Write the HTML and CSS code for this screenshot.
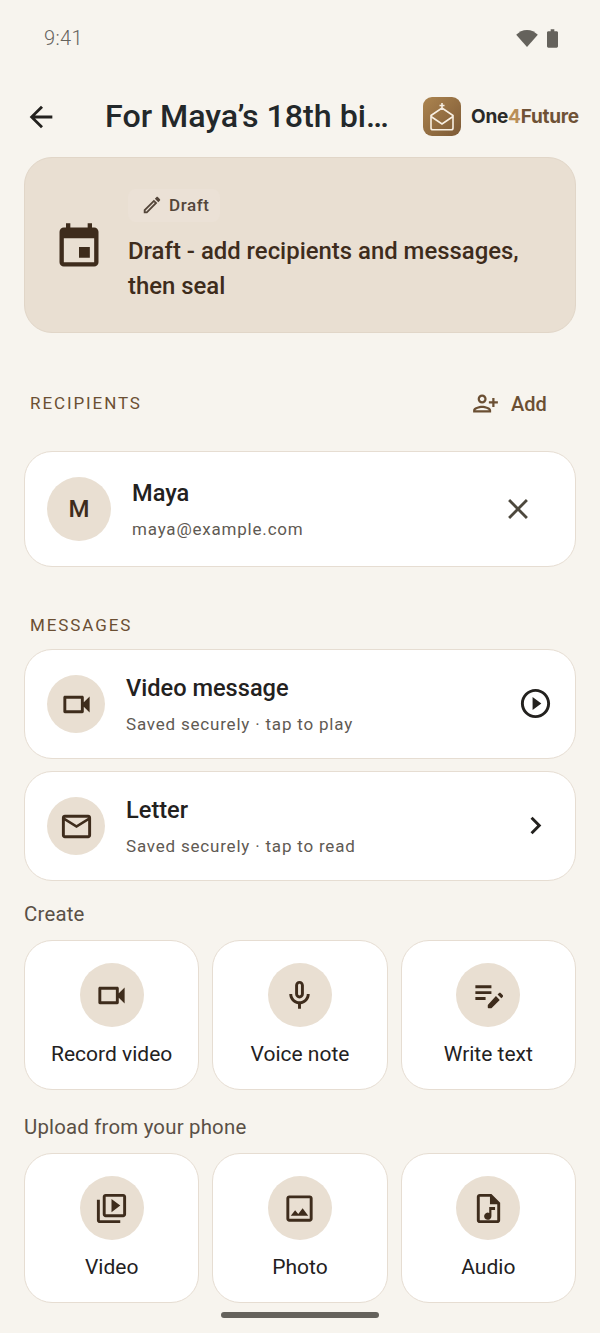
FILE: index.html
```html
<!DOCTYPE html>
<html>
<head>
	<title>For Maya's 18th birthday</title>
	<link rel="stylesheet" href="styles.css">
</head>
<body>
	<div class="screen">
		<div class="status_bar">
			<span class="status_time">9:41</span>
			<div class="status_icons">
				<svg class="wifi_icon" viewBox="0 0 24 20"><path d="M12 20L0 6.500C3 3.200 7.200 1 12 1s9 2.200 12 5.500z"/></svg>
				<svg class="battery_icon" viewBox="0 0 12 20"><path d="M4 0h4v2h2.500c.8 0 1.500.7 1.500 1.500v15c0 .8-.7 1.500-1.500 1.500h-9C.7 20 0 19.300 0 18.500v-15C0 2.700.7 2 1.500 2H4z"/></svg>
			</div>
		</div>

		<div class="top_bar">
			<svg class="back_icon" viewBox="0 0 24 24"><path d="M20 11H7.830l5.590-5.590L12 4l-8 8 8 8 1.410-1.410L7.830 13H20v-2z"/></svg>
			<h1 class="title">For Maya’s 18th bi…</h1>
			<div class="logo">
				<svg class="logo_mark" viewBox="0 0 38 39">
					<path class="logo_line" d="M19 6v7M16.500 8.500h5M8 18.500L19 11l11 7.500v12.500c0 1-.8 1.800-1.800 1.800H9.800C8.800 32.800 8 32 8 31z"/>
					<path class="logo_line" d="M8 19.500l11 7.500 11-7.500"/>
				</svg>
				<span class="logo_text">One<span class="logo_four">4</span><span class="logo_future">Future</span></span>
			</div>
		</div>

		<div class="banner">
			<svg class="banner_icon" viewBox="0 0 24 24"><path d="M17 12h-5v5h5v-5zM16 1v2H8V1H6v2H5c-1.110 0-1.990.9-1.990 2L3 19c0 1.100.89 2 2 2h14c1.100 0 2-.9 2-2V5c0-1.100-.9-2-2-2h-1V1h-2zm3 18H5V8h14v11z"/></svg>
			<div class="banner_body">
				<div class="chip">
					<svg class="chip_icon" viewBox="0 0 24 24"><path d="M14.060 9.020l.92.92L5.920 19H5v-.92l9.060-9.060M17.660 3c-.25 0-.51.1-.7.29l-1.830 1.830 3.750 3.750 1.830-1.830c.39-.39.39-1.020 0-1.410l-2.340-2.340c-.2-.2-.45-.29-.71-.29zm-3.600 3.190L3 17.250V21h3.750L17.810 9.940l-3.750-3.750z"/></svg>
					<span>Draft</span>
				</div>
				<p class="banner_text">Draft - add recipients and messages, then seal</p>
			</div>
		</div>

		<div class="recipients_head">
			<span class="section_label">RECIPIENTS</span>
			<div class="add_button">
				<svg class="add_icon" viewBox="0 0 24 24"><path d="M15 12c2.210 0 4-1.790 4-4s-1.790-4-4-4-4 1.790-4 4 1.790 4 4 4zm0-6c1.100 0 2 .9 2 2s-.9 2-2 2-2-.9-2-2 .9-2 2-2zm0 8c-2.670 0-8 1.340-8 4v2h16v-2c0-2.660-5.330-4-8-4zm-6 4c.22-.72 3.310-2 6-2 2.700 0 5.800 1.290 6 2H9zm-3-3v-3h3v-2H6V7H4v3H1v2h3v3h2z"/></svg>
				<span>Add</span>
			</div>
		</div>

		<div class="card recipient_card">
			<div class="avatar">M</div>
			<div class="card_text">
				<div class="recipient_name">Maya</div>
				<div class="card_sub">maya@example.com</div>
			</div>
			<svg class="close_icon" viewBox="0 0 24 24"><path d="M19 6.410L17.590 5 12 10.590 6.410 5 5 6.410 10.590 12 5 17.590 6.410 19 12 13.410 17.590 19 19 17.590 13.410 12z"/></svg>
		</div>

		<div class="section_label messages_label">MESSAGES</div>

		<div class="card message_card">
			<div class="round_icon small">
				<svg class="glyph" viewBox="0 0 24 24"><path d="M15 8v8H5V8h10m1-2H4c-.55 0-1 .45-1 1v10c0 .55.45 1 1 1h12c.55 0 1-.45 1-1v-3.500l4 4v-11l-4 4V7c0-.55-.45-1-1-1z"/></svg>
			</div>
			<div class="card_text">
				<div class="message_title">Video message</div>
				<div class="card_sub">Saved securely · tap to play</div>
			</div>
			<svg class="trail_icon" viewBox="0 0 24 24"><path d="M10 16.500l6-4.500-6-4.500v9zM12 2C6.480 2 2 6.480 2 12s4.480 10 10 10 10-4.480 10-10S17.520 2 12 2zm0 18c-4.410 0-8-3.590-8-8s3.590-8 8-8 8 3.590 8 8-3.590 8-8 8z"/></svg>
		</div>

		<div class="card message_card second">
			<div class="round_icon small">
				<svg class="glyph" viewBox="0 0 24 24"><path d="M22 6c0-1.100-.9-2-2-2H4c-1.100 0-2 .9-2 2v12c0 1.100.9 2 2 2h16c1.100 0 2-.9 2-2V6zm-2 0l-8 5-8-5h16zm0 12H4V8l8 5 8-5v10z"/></svg>
			</div>
			<div class="card_text">
				<div class="message_title">Letter</div>
				<div class="card_sub">Saved securely · tap to read</div>
			</div>
			<svg class="trail_icon" viewBox="0 0 24 24"><path d="M10 6L8.590 7.410 13.170 12l-4.580 4.590L10 18l6-6z"/></svg>
		</div>

		<div class="group_label create_label">Create</div>
		<div class="tiles">
			<div class="tile">
				<div class="round_icon">
					<svg class="glyph" viewBox="0 0 24 24"><path d="M15 8v8H5V8h10m1-2H4c-.55 0-1 .45-1 1v10c0 .55.45 1 1 1h12c.55 0 1-.45 1-1v-3.500l4 4v-11l-4 4V7c0-.55-.45-1-1-1z"/></svg>
				</div>
				<span>Record video</span>
			</div>
			<div class="tile">
				<div class="round_icon">
					<svg class="glyph" viewBox="0 0 24 24"><path d="M12 14c1.660 0 3-1.340 3-3V5c0-1.660-1.340-3-3-3S9 3.340 9 5v6c0 1.660 1.340 3 3 3zm-1-9c0-.55.45-1 1-1s1 .45 1 1v6c0 .55-.45 1-1 1s-1-.45-1-1V5zm6 6c0 2.760-2.240 5-5 5s-5-2.240-5-5H5c0 3.530 2.610 6.430 6 6.920V21h2v-3.080c3.390-.49 6-3.390 6-6.920h-2z"/></svg>
				</div>
				<span>Voice note</span>
			</div>
			<div class="tile">
				<div class="round_icon">
					<svg class="glyph" viewBox="0 0 24 24"><path d="M3 5h11v2H3zM3 9h11v2H3zM3 13h7v2H3zM18.200 11.300l.9-.9c.4-.4 1-.4 1.400 0l1.200 1.200c.4.4.4 1 0 1.400l-.9.9zM17.100 12.400l2.600 2.600-5.500 5.500c-.2.2-.4.3-.7.3h-1.500c-.3 0-.5-.2-.5-.5v-1.500c0-.3.1-.5.3-.7z"/></svg>
				</div>
				<span>Write text</span>
			</div>
		</div>

		<div class="group_label upload_label">Upload from your phone</div>
		<div class="tiles">
			<div class="tile">
				<div class="round_icon">
					<svg class="glyph" viewBox="0 0 24 24"><path d="M4 6H2v14c0 1.100.9 2 2 2h14v-2H4V6zm16-4H8c-1.100 0-2 .9-2 2v12c0 1.100.9 2 2 2h12c1.100 0 2-.9 2-2V4c0-1.100-.9-2-2-2zm0 14H8V4h12v12zM12 5.500v9l6-4.500z"/></svg>
				</div>
				<span>Video</span>
			</div>
			<div class="tile">
				<div class="round_icon">
					<svg class="glyph" viewBox="0 0 24 24"><path d="M19 5v14H5V5h14m0-2H5c-1.100 0-2 .9-2 2v14c0 1.100.9 2 2 2h14c1.100 0 2-.9 2-2V5c0-1.100-.9-2-2-2zm-4.860 8.860l-3 3.870L9 13.140 6 17h12l-3.860-5.140z"/></svg>
				</div>
				<span>Photo</span>
			</div>
			<div class="tile">
				<div class="round_icon">
					<svg class="glyph" viewBox="0 0 24 24"><path d="M14 2H6c-1.100 0-2 .9-2 2v16c0 1.100.9 2 2 2h12c1.100 0 2-.9 2-2V8zm4 18H6V4h7v5h5zM12.500 11v4a2.500 2.500 0 1 0 1.500 2.300V13h2.500v-2z"/></svg>
				</div>
				<span>Audio</span>
			</div>
		</div>

		<div class="home_bar"></div>
	</div>
</body>
</html>
```

FILE: styles.css
```css
html, body {
	margin: 0;
	padding: 0;
}
body {
	background-color: #f7f4ee;
	font-family: Roboto, "Liberation Sans", sans-serif;
	color: #23211e;
}
.screen {
	width: 600px;
	height: 1333px;
	padding: 0 24px;
	box-sizing: border-box;
	overflow: hidden;
	display: flex;
	flex-direction: column;
}
.status_bar {
	height: 76px;
	flex: none;
	display: flex;
	justify-content: space-between;
	align-items: center;
	padding: 0 18px 0 20px;
}
.status_time {
	font-size: 20px;
	font-weight: 300;
	color: #65625c;
	letter-spacing: 0.4px;
}
.status_icons {
	display: flex;
	align-items: center;
	gap: 9px;
}
.wifi_icon {
	width: 22px;
	height: 18px;
	fill: #65625c;
}
.battery_icon {
	width: 11px;
	height: 19px;
	fill: #65625c;
}
.top_bar {
	height: 81px;
	flex: none;
	display: flex;
	align-items: center;
}
.back_icon {
	width: 34px;
	height: 34px;
	fill: #23211e;
	flex: none;
}
.title {
	margin: 0 0 2px 47px;
	width: 284px;
	flex: none;
	font-size: 32.2px;
	font-weight: 500;
	color: #23282a;
	white-space: nowrap;
}
.logo {
	display: flex;
	align-items: center;
	margin-left: 34px;
	flex: none;
}
.logo_mark {
	width: 38px;
	height: 39px;
	border-radius: 9px;
	background: linear-gradient(135deg, #ac844f, #7d5a36);
	flex: none;
}
.logo_line {
	fill: none;
	stroke: #f8efe2;
	stroke-width: 1.6;
}
.logo_text {
	margin-left: 10px;
	font-family: Inter, sans-serif;
	font-size: 19px;
	font-weight: 700;
	letter-spacing: -0.25px;
	color: #2a2a28;
}
.logo_four {
	color: #b98f58;
}
.logo_future {
	color: #6f5236;
}
.banner {
	height: 176px;
	flex: none;
	box-sizing: border-box;
	background-color: #e9dfd2;
	border: 1.5px solid #e1d6c8;
	border-radius: 28px;
	display: flex;
	align-items: center;
	padding: 2px 27px 0;
}
.banner_icon {
	width: 52px;
	height: 52px;
	fill: #3e2c1c;
	flex: none;
	margin: 2px 23px 0 1px;
}
.banner_body {
	flex: 1;
	min-width: 0;
}
.chip {
	display: inline-flex;
	align-items: center;
	gap: 6px;
	height: 33px;
	padding: 0 10px 0 13px;
	border-radius: 8px;
	background-color: #ebe1d6;
	font-size: 17px;
	font-weight: 500;
	color: #54463a;
	letter-spacing: 0.6px;
}
.chip_icon {
	width: 22px;
	height: 22px;
	fill: #54463a;
}
.banner_text {
	margin: 12px 0 0;
	font-size: 23.9px;
	font-weight: 500;
	line-height: 35px;
	color: #3e2c1c;
}
.recipients_head {
	height: 118px;
	flex: none;
	box-sizing: border-box;
	display: flex;
	justify-content: space-between;
	align-items: center;
	padding: 22px 29px 0 6px;
}
.section_label {
	font-size: 17px;
	font-weight: 400;
	letter-spacing: 1.9px;
	color: #6b4f33;
}
.add_button {
	display: flex;
	align-items: center;
	gap: 12px;
	font-size: 20px;
	font-weight: 500;
	letter-spacing: 0.1px;
	color: #6b4f33;
	padding-top: 1px;
}
.add_icon {
	width: 27px;
	height: 27px;
	fill: #6b4f33;
	transform: scaleX(-1);
}
.card {
	flex: none;
	box-sizing: border-box;
	background-color: #fff;
	border: 1.5px solid #e6ddd2;
	border-radius: 28px;
	display: flex;
	align-items: center;
}
.card_text {
	flex: 1;
	min-width: 0;
}
.card_sub {
	font-size: 17px;
	color: #5f5a53;
	letter-spacing: 0.8px;
}
.recipient_card {
	height: 116px;
	padding: 0 40px 0 22px;
}
.avatar {
	width: 64px;
	height: 64px;
	border-radius: 50%;
	background-color: #e9dfd2;
	display: flex;
	align-items: center;
	justify-content: center;
	font-size: 24px;
	font-weight: 500;
	color: #3e2c1c;
	margin-right: 21px;
	flex: none;
}
.recipient_name {
	font-size: 23.6px;
	font-weight: 500;
	margin-bottom: 12px;
}
.close_icon {
	width: 34px;
	height: 34px;
	fill: #4d483d;
	flex: none;
}
.messages_label {
	flex: none;
	margin: 49px 0 14px 6px;
	line-height: 19px;
}
.message_card {
	height: 110px;
	padding: 0 22px 0 22px;
}
.message_card.second {
	margin-top: 12px;
}
.round_icon {
	width: 64px;
	height: 64px;
	border-radius: 50%;
	background-color: #e9dfd2;
	display: flex;
	align-items: center;
	justify-content: center;
	flex: none;
}
.round_icon.small {
	width: 58px;
	height: 58px;
	margin-right: 21px;
}
.glyph {
	width: 35px;
	height: 35px;
	fill: #3e2c1c;
}
.message_title {
	font-size: 23.6px;
	font-weight: 500;
	margin-bottom: 12px;
}
.trail_icon {
	width: 35px;
	height: 35px;
	fill: #23211e;
	flex: none;
	margin-bottom: 1px;
}
.group_label {
	flex: none;
	font-size: 20.4px;
	font-weight: 400;
	letter-spacing: 0.2px;
	color: #5a5046;
	line-height: 24px;
}
.create_label {
	margin: 21px 0 14px;
}
.upload_label {
	margin: 25px 0 14px;
}
.tiles {
	flex: none;
	display: grid;
	grid-template-columns: repeat(3, 1fr);
	gap: 13px;
}
.tile {
	height: 150px;
	box-sizing: border-box;
	background-color: #fff;
	border: 1.5px solid #e6ddd2;
	border-radius: 28px;
	display: flex;
	flex-direction: column;
	align-items: center;
	padding-top: 22px;
	font-size: 21px;
	font-weight: 400;
	color: #23211e;
}
.tile span {
	margin-top: 14px;
	line-height: 26px;
}
.home_bar {
	flex: none;
	width: 158px;
	height: 6px;
	border-radius: 3px;
	background-color: #65625c;
	margin: 9px auto 0;
}
```
